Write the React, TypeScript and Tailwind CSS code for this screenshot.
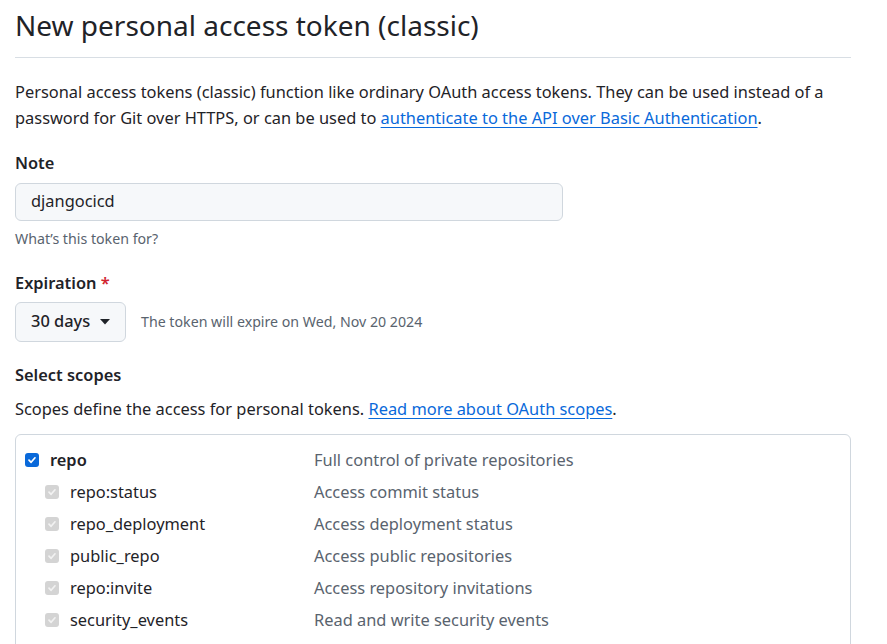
import React from "react";

const font = { fontFamily: '"Noto Sans", "Open Sans", sans-serif' };

type Scope = { name: string; desc: string; sub?: boolean };

const scopes: Scope[] = [
  { name: "repo", desc: "Full control of private repositories" },
  { name: "repo:status", desc: "Access commit status", sub: true },
  { name: "repo_deployment", desc: "Access deployment status", sub: true },
  { name: "public_repo", desc: "Access public repositories", sub: true },
  { name: "repo:invite", desc: "Access repository invitations", sub: true },
  { name: "security_events", desc: "Read and write security events", sub: true },
];

function Check({ disabled }: { disabled?: boolean }) {
  return (
    <span
      className={
        "flex h-[14px] w-[14px] shrink-0 items-center justify-center rounded-[3px] " +
        (disabled ? "bg-[#d4d4d4]" : "bg-[#0969da]")
      }
    >
      <svg width="10" height="10" viewBox="0 0 10 10" fill="none">
        <path
          d="M2 5.2 L4.1 7.3 L8 2.8"
          stroke={disabled ? "#f2f2f2" : "#ffffff"}
          strokeWidth="1.7"
          strokeLinecap="round"
          strokeLinejoin="round"
        />
      </svg>
    </span>
  );
}

export default function App() {
  return (
    <div className="min-h-screen bg-white text-[#1f2328]" style={font}>
      <div className="ml-[15px] w-[836px]">
        {/* Heading */}
        <h1 className="border-b border-[#d8dee4] pb-[12px] pt-[7px] text-[28px] font-normal leading-[37.5px]">
          New personal access token (classic)
        </h1>

        <p className="mt-[21px] text-[16.4px] leading-[26px]">
          Personal access tokens (classic) function like ordinary OAuth access tokens. They can be used instead of a
          password for Git over HTTPS, or can be used to{" "}
          <a href="#" className="text-[#0969da] underline underline-offset-[3px]">
            authenticate to the API over Basic Authentication
          </a>
          .
        </p>

        {/* Note */}
        <div className="mt-[19px] text-[16.4px] font-semibold leading-[26px]">Note</div>
        <div className="mt-[7px] flex h-[38px] w-[548px] items-center rounded-[6px] border border-[#d0d7de] bg-[#f6f8fa] px-[15px] text-[16.4px]">
          djangocicd
        </div>
        <div className="mt-[8px] text-[14.2px] leading-[20px] text-[#59636e]">What’s this token for?</div>

        {/* Expiration */}
        <div className="mt-[21px] text-[16.4px] font-semibold leading-[26px]">
          Expiration <span className="text-[#d1242f]">*</span>
        </div>
        <div className="mt-[6px] flex items-center">
          <button className="flex h-[40px] w-[111px] items-center rounded-[6px] border border-[#d0d7de] bg-[#f6f8fa] pl-[15px] text-[16.4px] font-medium">
            30 days
            <svg className="ml-[10px]" width="10" height="6" viewBox="0 0 10 6">
              <path d="M0 0 H10 L5 5.5 Z" fill="#1f2328" />
            </svg>
          </button>
          <span className="ml-[15px] text-[14.2px] text-[#59636e]">The token will expire on Wed, Nov 20 2024</span>
        </div>

        {/* Scopes */}
        <div className="mt-[20px] text-[16.4px] font-semibold leading-[26px]">Select scopes</div>
        <p className="mt-[8px] text-[16.4px] leading-[26px]">
          Scopes define the access for personal tokens.{" "}
          <a href="#" className="text-[#0969da] underline underline-offset-[3px]">
            Read more about OAuth scopes
          </a>
          .
        </p>

        <div className="mt-[12px] rounded-t-[6px] border border-[#d0d7de] pt-[10px] pb-[20px]">
          {scopes.map((s) => (
            <div key={s.name} className="flex h-[32px] items-center text-[16.4px]">
              <div className={"flex w-[298px] items-center gap-[11px] " + (s.sub ? "pl-[29px]" : "pl-[9px]")}>
                <Check disabled={s.sub} />
                <span className={s.sub ? "" : "font-semibold"}>{s.name}</span>
              </div>
              <span className="text-[#59636e]">{s.desc}</span>
            </div>
          ))}
        </div>
      </div>
    </div>
  );
}
